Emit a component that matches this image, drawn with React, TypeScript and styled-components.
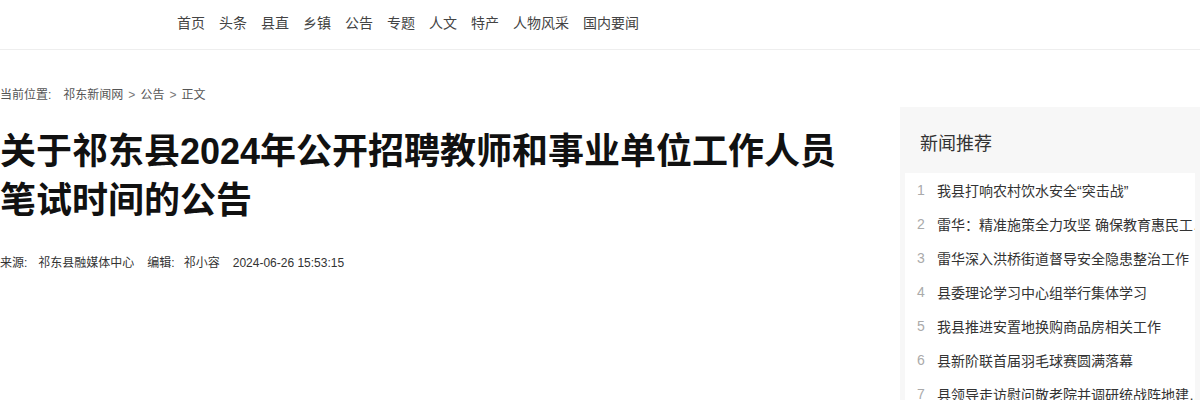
import React from 'react';
import styled, {createGlobalStyle} from 'styled-components';

const GlobalStyle = createGlobalStyle`
    html, body {
        margin: 0;
        padding: 0;
        background: #fff;
        font-family: "Liberation Sans", Arial, "Noto Sans CJK SC", sans-serif;
        color: #333;
    }
    * { box-sizing: border-box; }
`

const navItems = ['首页', '头条', '县直', '乡镇', '公告', '专题', '人文', '特产', '人物风采', '国内要闻'];

const newsList = [
    '我县打响农村饮水安全“突击战”',
    '雷华：精准施策全力攻坚 确保教育惠民工程落地见效',
    '雷华深入洪桥街道督导安全隐患整治工作',
    '县委理论学习中心组举行集体学习',
    '我县推进安置地换购商品房相关工作',
    '县新阶联首届羽毛球赛圆满落幕',
    '县领导走访慰问敬老院并调研统战阵地建设情况',
];

export default function App(){
    return (
        <Page>
            <GlobalStyle/>
            <Header>
                <Nav>
                    {navItems.map((item) => (
                        <NavLink key={item} href="#">{item}</NavLink>
                    ))}
                </Nav>
            </Header>

            <Body>
                <Main>
                    <Crumbs>
                        <span>当前位置:</span>
                        <CrumbPath>
                            <a href="#">祁东新闻网</a>
                            <Sep>&gt;</Sep>
                            <a href="#">公告</a>
                            <Sep>&gt;</Sep>
                            <span>正文</span>
                        </CrumbPath>
                    </Crumbs>

                    <Title>关于祁东县2024年公开招聘教师和事业单位工作人员笔试时间的公告</Title>

                    <Meta>
                        <MetaItem $space={11}>来源:<b>祁东县融媒体中心</b></MetaItem>
                        <MetaItem $space={9}>编辑:<b>祁小容</b></MetaItem>
                        <MetaItem>2024-06-26 15:53:15</MetaItem>
                    </Meta>
                </Main>

                <Sidebar>
                    <SideTitle>新闻推荐</SideTitle>
                    <List>
                        {newsList.map((text, i) => (
                            <Item key={i}>
                                <Num>{i + 1}</Num>
                                <ItemText href="#">{text}</ItemText>
                            </Item>
                        ))}
                    </List>
                </Sidebar>
            </Body>
        </Page>
    )
}

const Page = styled.div`
    width: 1200px;
    height: 400px;
    overflow: hidden;
`

const Header = styled.div`
    height: 50px;
    border-bottom: 1px solid #eeeeee;
`

const Nav = styled.nav`
    display: flex;
    align-items: center;
    gap: 14px;
    height: 49px;
    padding-left: 177px;
    padding-bottom: 6px;
`

const NavLink = styled.a`
    font-size: 14px;
    color: #444;
    text-decoration: none;
`

const Body = styled.div`
    display: flex;
`

const Main = styled.div`
    width: 900px;
    padding-right: 40px;
`

const Crumbs = styled.div`
    display: flex;
    gap: 12px;
    margin-top: 37px;
    font-size: 12px;
    line-height: 16px;
    color: #555;

    a {
        color: #555;
        text-decoration: none;
    }
`

const CrumbPath = styled.div`
    display: flex;
    gap: 5px;
`

const Sep = styled.span`
    color: #777;
`

const Title = styled.h1`
    margin: 24px 0 0;
    font-size: 36px;
    line-height: 49px;
    font-weight: bold;
    color: #111;
`

const Meta = styled.div`
    display: flex;
    gap: 13px;
    margin-top: 30px;
    font-size: 12px;
    line-height: 16px;
    color: #333;
`

const MetaItem = styled.span<{$space?: number}>`
    b {
        font-weight: normal;
        margin-left: ${(p) => p.$space ?? 0}px;
    }
`

const Sidebar = styled.div`
    width: 300px;
    margin-top: 57px;
    padding: 0 5px;
    background: #f7f7f7;
    height: 400px;
`

const SideTitle = styled.h3`
    margin: 0;
    padding: 25px 15px 0;
    height: 66px;
    font-size: 18px;
    line-height: 24px;
    font-weight: normal;
    color: #333;
`

const List = styled.ul`
    list-style: none;
    margin: 0;
    padding: 0 0 0 12px;
    background: #fff;
    overflow: hidden;
`

const Item = styled.li`
    display: flex;
    align-items: center;
    height: 34px;
    font-size: 14px;
`

const Num = styled.span`
    width: 20px;
    flex: none;
    color: #aaa;
`

const ItemText = styled.a`
    flex: none;
    width: 272px;
    color: #333;
    text-decoration: none;
    white-space: nowrap;
    overflow: hidden;
    text-overflow: ellipsis;
`
